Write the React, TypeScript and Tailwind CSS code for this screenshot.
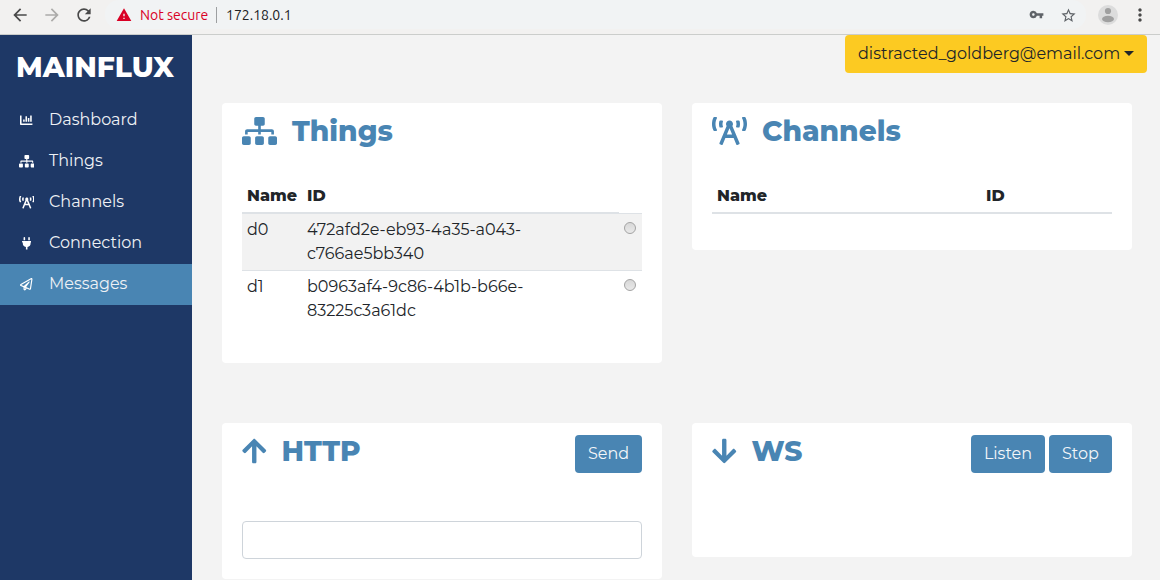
import type { ComponentType, ReactNode } from 'react';
import {
  FaArrowDown,
  FaArrowUp,
  FaBroadcastTower,
  FaPlug,
  FaRegPaperPlane,
  FaSitemap,
} from 'react-icons/fa';
import { MdArrowBack, MdArrowForward, MdMoreVert, MdRefresh, MdStarBorder, MdVpnKey, MdWarning } from 'react-icons/md';

type IconType = ComponentType<{ className?: string }>;

function ChartIcon({ className }: { className?: string }) {
  return (
    <svg className={className} viewBox="0 0 512 512" fill="currentColor">
      <path d="M332.8 320h38.4c6.4 0 12.8-6.4 12.8-12.8V172.8c0-6.4-6.4-12.8-12.8-12.8h-38.4c-6.4 0-12.8 6.4-12.8 12.8v134.4c0 6.4 6.4 12.8 12.8 12.8zm96 0h38.4c6.4 0 12.8-6.4 12.8-12.8V76.8c0-6.4-6.4-12.8-12.8-12.8h-38.4c-6.4 0-12.8 6.4-12.8 12.8v230.4c0 6.4 6.4 12.8 12.8 12.8zm-288 0h38.4c6.4 0 12.8-6.4 12.8-12.8v-70.4c0-6.4-6.4-12.8-12.8-12.8h-38.4c-6.4 0-12.8 6.4-12.8 12.8v70.4c0 6.4 6.4 12.8 12.8 12.8zm96 0h38.4c6.4 0 12.8-6.4 12.8-12.8V108.8c0-6.4-6.4-12.8-12.8-12.8h-38.4c-6.4 0-12.8 6.4-12.8 12.8v198.4c0 6.4 6.4 12.8 12.8 12.8zM496 384H64V80c0-8.84-7.16-16-16-16H16C7.16 64 0 71.16 0 80v336c0 17.67 14.33 32 32 32h464c8.84 0 16-7.16 16-16v-32c0-8.84-7.16-16-16-16z" />
    </svg>
  );
}

const navItems: { label: string; icon: IconType; iconClass: string; active?: boolean }[] = [
  { label: 'Dashboard', icon: ChartIcon, iconClass: 'h-[12.5px] w-[12.5px]' },
  { label: 'Things', icon: FaSitemap, iconClass: 'h-[12.5px] w-[15.6px]' },
  { label: 'Channels', icon: FaBroadcastTower, iconClass: 'h-[12.5px] w-[15.6px]' },
  { label: 'Connection', icon: FaPlug, iconClass: 'h-[12.5px] w-[9.4px]' },
  { label: 'Messages', icon: FaRegPaperPlane, iconClass: 'h-[12.5px] w-[12.5px]', active: true },
];

function BrowserBar() {
  return (
    <header className="flex h-[35px] shrink-0 border-b border-[#cbcdcb] bg-[#f2f1f0] font-['Ubuntu','Noto_Sans',sans-serif] text-[14px] leading-[20px]">
      <div className="flex h-[30px] w-[105px] items-center gap-3 pl-[10px] text-[#494949]">
        <MdArrowBack className="h-5 w-5" />
        <MdArrowForward className="h-5 w-5 text-[#acaba9]" />
        <MdRefresh className="h-5 w-5" />
      </div>
      <div className="flex h-[29px] w-[981px] items-center rounded-r-[14px] rounded-l-[14px] bg-[#f1f3f4] pt-[1px] pr-[9.5px] pl-[11px]">
        <MdWarning className="h-4 w-4 text-[#d90025]" />
        <span className="ml-2 w-[76px] whitespace-nowrap text-[#d90025]">Not secure</span>
        <span className="h-4 w-px bg-[#9d9fa1]" />
        <span className="ml-[9px] text-[#202124]">172.18.0.1</span>
        <MdVpnKey className="mb-[2px] ml-auto h-[15px] w-[15px] text-[#5f6368]" />
        <MdStarBorder className="ml-4 h-[17px] w-[17px] text-[#5f6368]" />
      </div>
      <div className="flex h-[30px] items-center pl-[12px]">
        <svg className="h-5 w-5" viewBox="0 0 20 20">
          <circle cx="10" cy="10" r="10" fill="#dcdcdc" />
          <circle cx="10" cy="6" r="3.1" fill="#a0a0a0" />
          <ellipse cx="10" cy="14" rx="6" ry="3.2" fill="#a0a0a0" />
        </svg>
        <MdMoreVert className="ml-3 h-5 w-5 text-[#494949]" />
      </div>
    </header>
  );
}

function Sidebar() {
  return (
    <nav className="w-48 shrink-0 bg-[#1e3866] text-[#eef1f5]">
      <h1 className="flex h-[65px] items-center pb-[2px] pl-4 text-[28px] leading-none font-extrabold text-white">
        MAINFLUX
      </h1>
      {navItems.map(({ label, icon: Icon, iconClass, active }) => (
        <a key={label} className={`flex h-[41px] items-center ${active ? 'bg-[#4985b3]' : ''}`}>
          <span className="flex w-[49px] justify-center pl-[4px] text-white">
            <Icon className={iconClass} />
          </span>
          <span className="pb-px">{label}</span>
        </a>
      ))}
    </nav>
  );
}

function Card({
  icon: Icon,
  iconClass,
  title,
  className,
  actions,
  children,
}: {
  icon: IconType;
  iconClass: string;
  title: string;
  className: string;
  actions?: ReactNode;
  children?: ReactNode;
}) {
  return (
    <section className={`rounded-[4px] bg-white px-5 ${className}`}>
      <div className="flex h-[76px] items-start">
        <h2 className="flex h-[56px] items-center text-[#4985b3]">
          <Icon className={iconClass} />
          <span className="ml-[15px] text-[28px] leading-none font-extrabold">{title}</span>
        </h2>
        <div className="mt-3 ml-auto flex gap-1">{actions}</div>
      </div>
      {children}
    </section>
  );
}

function Button({ label, className }: { label: string; className: string }) {
  return (
    <button className={`h-[38px] rounded-[4px] bg-[#4985b3] text-center text-[#f3f6f9] ${className}`}>
      {label}
    </button>
  );
}

function Radio() {
  return (
    <span className="mx-auto mt-[4px] block h-3 w-3 rounded-full border border-[#a3a3a3] bg-linear-to-b from-[#d8d8d8] to-[#e9e9e9]" />
  );
}

function ThingRow({ name, id, striped }: { name: string; id: [string, string]; striped?: boolean }) {
  return (
    <div className={`flex pt-[4px] pl-[5px] ${striped ? 'h-[56px] bg-[#f2f2f2]' : 'h-[57px] border-t border-[#dee2e6]'}`}>
      <span className="w-[60px]">{name}</span>
      <span className="flex-1">
        {id[0]}
        <br />
        {id[1]}
      </span>
      <span className="w-[25px]">
        <Radio />
      </span>
    </div>
  );
}

export default function App() {
  return (
    <div className="flex h-[580px] w-[1160px] flex-col overflow-hidden bg-[#f3f3f3] font-['Montserrat','Inter',sans-serif] text-[16px] leading-6 text-[#212529]">
      <BrowserBar />
      <div className="flex min-h-0 flex-1">
        <Sidebar />
        <main className="flex-1 pl-[30px]">
          <div className="flex h-[68px] justify-end pr-[13px]">
            <button className="flex h-[38px] w-[302px] items-center rounded-[4px] bg-[#fcca22] pb-px pl-[13px] whitespace-nowrap text-[#212529]">
              <span className="w-[266px] text-left">distracted_goldberg@email.com</span>
              <svg className="h-[5px] w-[10px]" viewBox="0 0 10 5">
                <path d="M0 0h10L5 5z" fill="#212529" />
              </svg>
            </button>
          </div>
          <div className="grid grid-cols-[440px_440px] grid-rows-[260px_157px] items-start gap-x-[30px] gap-y-[60px]">
            <Card icon={FaSitemap} iconClass="h-[28px] w-[35px]" title="Things" className="h-[260px]">
              <div className="flex h-[35px]">
                <div className="flex flex-1 border-b-2 border-[#dee2e6] pt-[5px] pl-[5px] font-extrabold">
                  <span className="w-[60px]">Name</span>
                  <span>ID</span>
                </div>
                <div className="mt-[34px] h-px w-[23px] bg-[#dee2e6]" />
              </div>
              <ThingRow name="d0" id={['472afd2e-eb93-4a35-a043-', 'c766ae5bb340']} striped />
              <ThingRow name="d1" id={['b0963af4-9c86-4b1b-b66e-', '83225c3a61dc']} />
            </Card>
            <Card icon={FaBroadcastTower} iconClass="h-[28px] w-[35px]" title="Channels" className="h-[147px]">
              <div className="flex h-[35px] border-b-2 border-[#dee2e6] pt-[5px] pl-[5px] font-extrabold">
                <span className="w-[269px]">Name</span>
                <span>ID</span>
              </div>
            </Card>
            <Card
              icon={FaArrowUp}
              iconClass="h-[28px] w-[24.5px]"
              title="HTTP"
              className="h-[156px]"
              actions={<Button label="Send" className="w-[67px]" />}
            >
              <input className="mt-[22px] h-[38px] w-full rounded-[4px] border border-[#ced4da] bg-white px-3" />
            </Card>
            <Card
              icon={FaArrowDown}
              iconClass="h-[28px] w-[24.5px]"
              title="WS"
              className="h-[134px]"
              actions={
                <>
                  <Button label="Listen" className="w-[74px]" />
                  <Button label="Stop" className="w-[63px]" />
                </>
              }
            />
          </div>
        </main>
      </div>
    </div>
  );
}
